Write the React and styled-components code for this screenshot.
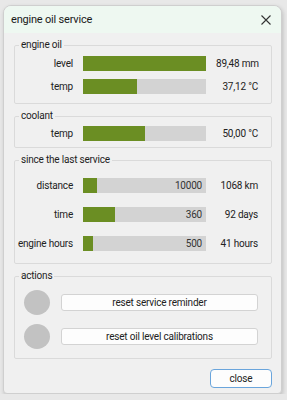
import styled, { createGlobalStyle } from "styled-components";

const GlobalStyle = createGlobalStyle`
  body {
    margin: 0;
    background: #e8e8e8;
    font-family: Roboto, "Noto Sans", sans-serif;
  }
`;

const engineOil = [
  { label: "level", pct: 100, value: "89,48 mm" },
  { label: "temp", pct: 44, value: "37,12 °C" },
];
const coolant = [{ label: "temp", pct: 50, value: "50,00 °C" }];
const service = [
  { label: "distance", pct: 11, limit: "10000", value: "1068 km" },
  { label: "time", pct: 26, limit: "360", value: "92 days" },
  { label: "engine hours", pct: 8, limit: "500", value: "41 hours" },
];

export default function App() {
  return (
    <>
      <GlobalStyle />
      <Window>
        <TitleBar>
          <span>engine oil service</span>
          <svg width="10" height="10" viewBox="0 0 10 10">
            <path d="M0.5 0.5 L9.5 9.5 M9.5 0.5 L0.5 9.5" stroke="#333" strokeWidth="1.1" />
          </svg>
        </TitleBar>
        <Body>
          <Group $pt={5} $pb={9} $gap={8}>
            <Legend>engine oil</Legend>
            {engineOil.map((r) => (
              <Row key={r.label}>
                <Label>{r.label}</Label>
                <Bar>
                  <Fill style={{ width: `${r.pct}%` }} />
                </Bar>
                <Value>{r.value}</Value>
              </Row>
            ))}
          </Group>
          <Group $pt={4} $pb={6} $gap={8}>
            <Legend>coolant</Legend>
            {coolant.map((r) => (
              <Row key={r.label}>
                <Label>{r.label}</Label>
                <Bar>
                  <Fill style={{ width: `${r.pct}%` }} />
                </Bar>
                <Value>{r.value}</Value>
              </Row>
            ))}
          </Group>
          <Group $pt={12} $pb={12} $gap={14}>
            <Legend>since the last service</Legend>
            {service.map((r) => (
              <Row key={r.label}>
                <Label>{r.label}</Label>
                <Bar>
                  <Fill style={{ width: `${r.pct}%` }} />
                  <Limit>{r.limit}</Limit>
                </Bar>
                <Value>{r.value}</Value>
              </Row>
            ))}
          </Group>
          <Group $pt={8} $pb={9} $gap={9}>
            <Legend>actions</Legend>
            <ActionRow>
              <Lamp />
              <Button>reset service reminder</Button>
            </ActionRow>
            <ActionRow>
              <Lamp />
              <Button>reset oil level calibrations</Button>
            </ActionRow>
          </Group>
          <Footer>
            <CloseButton>close</CloseButton>
          </Footer>
        </Body>
      </Window>
    </>
  );
}

const Window = styled.div`
  margin: 5px 0 0 3px;
  width: 279px;
  height: 389px;
  box-sizing: border-box;
  border: 1px solid #cfcfcf;
  border-radius: 8px 8px 4px 4px;
  background: #f0f0f0;
  box-shadow: 1px 2px 4px rgba(0, 0, 0, 0.18);
  display: flex;
  flex-direction: column;
  overflow: hidden;
`;

const TitleBar = styled.div`
  height: 27px;
  flex: none;
  display: flex;
  align-items: center;
  justify-content: space-between;
  padding: 0 10px 0 7px;
  background: #eef8f1;
  font-size: 11px;
  letter-spacing: -0.2px;
  color: #1a1a1a;
  svg {
    margin-top: 1px;
  }
`;

const Body = styled.div`
  flex: 1;
  display: flex;
  flex-direction: column;
  padding: 6px 9px 0 10px;
  gap: 6px;
`;

const Group = styled.fieldset`
  margin: 0;
  padding: ${(p) => p.$pt}px 13px ${(p) => p.$pb}px 0;
  border: 1px solid #dadada;
  border-radius: 2px;
  display: flex;
  flex-direction: column;
  gap: ${(p) => p.$gap}px;
  min-width: 0;
`;

const Legend = styled.legend`
  margin-left: 4px;
  padding: 0 2px;
  font-size: 10px;
  line-height: 12px;
  letter-spacing: -0.2px;
  color: #1e1e1e;
`;

const Row = styled.div`
  display: grid;
  grid-template-columns: 58px 123px 1fr;
  column-gap: 10px;
  align-items: center;
  font-size: 10px;
  letter-spacing: -0.2px;
  color: #222;
`;

const Label = styled.span`
  text-align: right;
  white-space: nowrap;
`;

const Bar = styled.div`
  position: relative;
  height: 15px;
  background: #d3d3d3;
  display: flex;
  align-items: center;
  justify-content: flex-end;
`;

const Fill = styled.div`
  position: absolute;
  left: 0;
  top: 0;
  bottom: 0;
  background: #6b8e23;
`;

const Limit = styled.span`
  position: relative;
  padding-right: 4px;
  color: #333;
`;

const Value = styled.span`
  text-align: right;
  white-space: nowrap;
`;

const ActionRow = styled.div`
  display: flex;
  align-items: center;
  gap: 11px;
  padding-left: 9px;
`;

const Lamp = styled.div`
  width: 26px;
  height: 25px;
  border-radius: 50%;
  background: #c2c2c2;
  flex: none;
`;

const Button = styled.button`
  width: 199px;
  height: 17px;
  padding: 0;
  border: 1px solid #d3d3d3;
  border-radius: 3px;
  background: #fdfdfd;
  font-family: inherit;
  font-size: 10px;
  letter-spacing: -0.2px;
  color: #222;
`;

const Footer = styled.div`
  display: flex;
  justify-content: flex-end;
  padding-top: 4px;
`;

const CloseButton = styled.button`
  width: 62px;
  height: 19px;
  padding: 0;
  border: 1px solid #6aa5dc;
  border-radius: 4px;
  background: #fdfdfd;
  font-family: inherit;
  font-size: 10px;
  letter-spacing: -0.2px;
  color: #222;
`;
